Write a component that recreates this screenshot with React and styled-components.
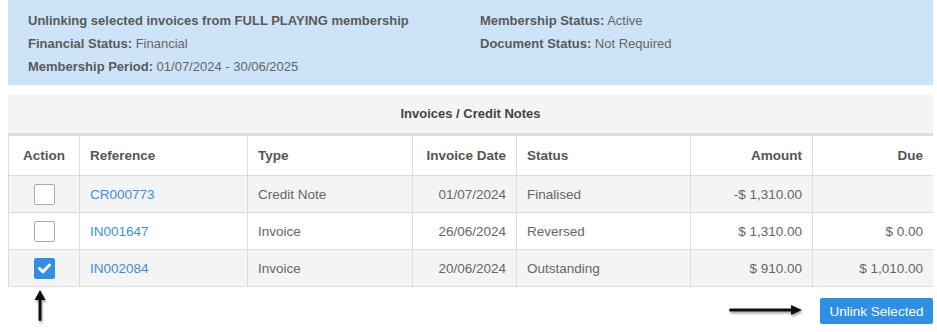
import React from 'react';
import styled, { createGlobalStyle } from 'styled-components';

const GlobalStyle = createGlobalStyle`
  body {
    margin: 0 4px 0 8px;
    font-family: "Liberation Sans", Arial, sans-serif;
    font-size: 13px;
    color: #666;
    background: #fff;
  }
`;

const InfoPanel = styled.div`
  background: #cde4f8;
  padding: 9px 20px 7px;
  display: grid;
  grid-template-columns: 452px 1fr;
  line-height: 23px;
  height: 69px;
`;

const InfoCol = styled.div`
  display: flex;
  flex-direction: column;
`;

const Line = styled.div`
  b {
    color: #595959;
    font-weight: bold;
  }
`;

const Section = styled.div`
  margin-top: 10px;
`;

const SectionTitle = styled.div`
  background: #f4f4f4;
  border-bottom: 2px solid #dcdcdc;
  height: 38px;
  line-height: 38px;
  text-align: center;
  font-weight: bold;
  color: #444;
`;

const Table = styled.table`
  width: 100%;
  border-collapse: collapse;
  table-layout: fixed;
  border: 1px solid #dcdcdc;
  font-size: 13.5px;

  th,
  td {
    border: 1px solid #dcdcdc;
    padding: 0 10px;
  }

  th {
    height: 39px;
    font-weight: bold;
    color: #555;
    background: #fff;
  }

  td {
    height: 36px;
  }

  tbody tr:nth-child(odd) td {
    background: #f4f4f4;
  }
`;

const Cell = styled.td`
  text-align: ${(p) => p.align || 'left'};
`;

const Head = styled.th`
  text-align: ${(p) => p.align || 'left'};
`;

const Link = styled.a`
  color: #3b8fde;
  text-decoration: none;
`;

const Box = styled.span`
  display: inline-block;
  width: 19px;
  height: 19px;
  border: 1px solid ${(p) => (p.checked ? '#2e8fe5' : '#aaa')};
  border-radius: 2px;
  background: ${(p) => (p.checked ? '#2e8fe5' : '#fff')};
  vertical-align: middle;
  position: relative;

  svg {
    position: absolute;
    left: 3px;
    top: 4px;
  }
`;

const Footer = styled.div`
  display: flex;
  justify-content: space-between;
  align-items: flex-start;
`;

const UpArrow = styled.svg`
  margin-left: 25px;
  margin-top: 2px;
`;

const Actions = styled.div`
  display: flex;
  align-items: center;
  gap: 14px;
  margin-top: 11px;
`;

const Button = styled.button`
  background: #2e8fe5;
  color: #fff;
  border: none;
  border-radius: 2px;
  font-family: "Liberation Sans", Arial, sans-serif;
  font-size: 13.5px;
  width: 113px;
  height: 26px;
  padding: 0;
`;

const Checkbox = ({ checked }) => (
  <Box checked={checked}>
    {checked && (
      <svg width="13" height="11" viewBox="0 0 13 11">
        <path d="M1.5 5.5 L5 8.8 L11.5 2" stroke="#fff" strokeWidth="3" fill="none" strokeLinecap="round" strokeLinejoin="round" />
      </svg>
    )}
  </Box>
);

const rows = [
  { ref: 'CR000773', type: 'Credit Note', date: '01/07/2024', status: 'Finalised', amount: '-$ 1,310.00', due: '' },
  { ref: 'IN001647', type: 'Invoice', date: '26/06/2024', status: 'Reversed', amount: '$ 1,310.00', due: '$ 0.00' },
  { ref: 'IN002084', type: 'Invoice', date: '20/06/2024', status: 'Outstanding', amount: '$ 910.00', due: '$ 1,010.00', checked: true },
];

const App = () => {
  return (
    <>
      <GlobalStyle />
      <InfoPanel>
        <InfoCol>
          <Line><b>Unlinking selected invoices from FULL PLAYING membership</b></Line>
          <Line><b>Financial Status:</b> Financial</Line>
          <Line><b>Membership Period:</b> 01/07/2024 - 30/06/2025</Line>
        </InfoCol>
        <InfoCol>
          <Line><b>Membership Status:</b> Active</Line>
          <Line><b>Document Status:</b> Not Required</Line>
        </InfoCol>
      </InfoPanel>
      <Section>
        <SectionTitle>Invoices / Credit Notes</SectionTitle>
        <Table>
          <colgroup>
            <col style={{ width: 71 }} />
            <col style={{ width: 168 }} />
            <col style={{ width: 165 }} />
            <col style={{ width: 104 }} />
            <col style={{ width: 174 }} />
            <col style={{ width: 122 }} />
            <col style={{ width: 121 }} />
          </colgroup>
          <thead>
            <tr>
              <Head align="center">Action</Head>
              <Head>Reference</Head>
              <Head>Type</Head>
              <Head align="right">Invoice Date</Head>
              <Head>Status</Head>
              <Head align="right">Amount</Head>
              <Head align="right">Due</Head>
            </tr>
          </thead>
          <tbody>
            {rows.map((r) => (
              <tr key={r.ref}>
                <Cell align="center"><Checkbox checked={r.checked} /></Cell>
                <Cell><Link href="#">{r.ref}</Link></Cell>
                <Cell>{r.type}</Cell>
                <Cell align="right">{r.date}</Cell>
                <Cell>{r.status}</Cell>
                <Cell align="right">{r.amount}</Cell>
                <Cell align="right">{r.due}</Cell>
              </tr>
            ))}
          </tbody>
        </Table>
      </Section>
      <Footer>
        <UpArrow width="14" height="36" viewBox="0 0 14 36">
          <defs>
            <filter id="sh1" x="-50%" y="-20%" width="200%" height="150%">
              <feDropShadow dx="1" dy="2" stdDeviation="1.2" floodColor="#000" floodOpacity="0.35" />
            </filter>
          </defs>
          <g filter="url(#sh1)">
            <path d="M7 1 L12.5 11 L1.5 11 Z" fill="#111" />
            <rect x="5.5" y="9" width="3" height="23" rx="1.5" fill="#111" />
          </g>
        </UpArrow>
        <Actions>
          <svg width="78" height="14" viewBox="0 0 78 14">
            <defs>
              <filter id="sh2" x="-10%" y="-50%" width="120%" height="250%">
                <feDropShadow dx="1" dy="2" stdDeviation="1.2" floodColor="#000" floodOpacity="0.35" />
              </filter>
            </defs>
            <g filter="url(#sh2)">
              <rect x="1" y="4.5" width="66" height="3" rx="1.5" fill="#111" />
              <path d="M74 6 L63 1 L63 11 Z" fill="#111" />
            </g>
          </svg>
          <Button>Unlink Selected</Button>
        </Actions>
      </Footer>
    </>
  );
};

export default App;
